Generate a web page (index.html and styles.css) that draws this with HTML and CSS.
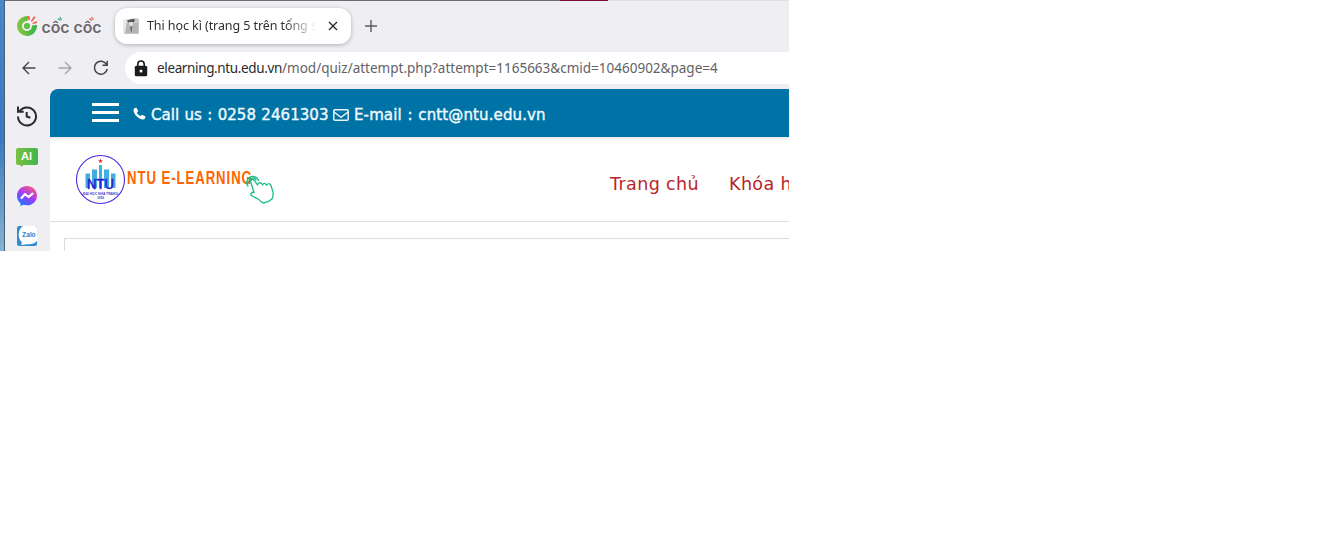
FILE: index.html
```html
<!DOCTYPE html>
<html lang="vi">
<head>
<meta charset="utf-8">
<title>Thi học kì</title>
<link rel="stylesheet" href="styles.css">
</head>
<body>
<div class="screen">
  <div class="desktop"></div>
  <div class="browser">
    <div class="top-edge"><span class="edge-dark"></span><span class="edge-red"></span></div>
    <div class="tabs">
      <svg class="brand" width="88" height="28" viewBox="0 0 88 28">
        <defs><linearGradient id="g" x1="0" y1="0" x2="1" y2="0"><stop offset="0" stop-color="#8cc63f"/><stop offset="1" stop-color="#35b44a"/></linearGradient></defs>
        <path d="M11 4A10 10 0 1 0 20 13L14.500 13.500A4.600 4.600 0 1 1 10.500 9.400Z" fill="url(#g)"/>
        <circle cx="10" cy="14" r="5" fill="#efeef3"/><circle cx="10" cy="14" r="3.100" fill="#64bd45"/>
        <path d="M11.300 8 10.500 4.300 12.500 4.200 12.800 8ZM13.800 9 17 4.300 18.500 5.300 15 9.800ZM15.500 11 19.500 9 20 10.900 15.800 12.100Z" fill="#ef5a3c"/>
        <text x="24.500" y="21" class="brand-text" textLength="28" lengthAdjust="spacingAndGlyphs">côc</text>
        <text x="56.500" y="21" class="brand-text" textLength="28" lengthAdjust="spacingAndGlyphs">côc</text>
        <path d="M41 6.500l2.300 2M43 5l1.500 3" stroke="#39b570" stroke-width="1.200"/>
        <path d="M72.500 6.500l2.300 2M74.500 5l2 3" stroke="#ef5a3c" stroke-width="1.200"/>
      </svg>
      <div class="tab">
        <svg width="16" height="16" viewBox="0 0 16 16"><path d="M1 2 13 0 16 1V16H1Z" fill="#c7c7c7"/><path d="M0 2H4L2 15H0Z" fill="#e8e8e8"/><path d="M2 15 4 5H15V15Z" fill="#b5b5b5"/><path d="M4 2.500 10 .8 12 2 11 4 9.500 5H6L5 4Z" fill="#555"/><path d="M6 4H10V7L8 8.500 6 7Z" fill="#ddd"/><path d="M7 8.500 8 9 9.500 8 8.500 14H8Z" fill="#666"/></svg>
        <span class="tab-title">Thi học kì (trang 5 trên tổng s</span>
        <svg class="close" width="10" height="10" viewBox="0 0 10 10"><path d="M1 1 9 9M9 1 1 9" stroke="#222" stroke-width="1.200"/></svg>
      </div>
      <svg class="plus" width="12" height="12" viewBox="0 0 12 12"><path d="M6 0V12M0 6H12" stroke="#5b5b60" stroke-width="1.400"/></svg>
    </div>
    <div class="toolbar">
      <svg width="14" height="14" viewBox="0 0 14 14" fill="none" stroke="#46464a" stroke-width="1.400"><path d="M13.500 7H1.500M7 1 1 7 7 13"/></svg>
      <svg width="14" height="14" viewBox="0 0 14 14" fill="none" stroke="#a5a4a8" stroke-width="1.400"><path d="M.5 7H12.500M7 1 13 7 7 13"/></svg>
      <svg width="16" height="16" viewBox="0 0 16 16" fill="none" stroke="#444448" stroke-width="1.500"><path d="M13.600 4.500A6.500 6.500 0 1 0 14.300 9M14.200 .8V5.200H9.500"/></svg>
      <div class="address">
        <svg width="14" height="17" viewBox="0 0 14 17"><path d="M3.800 7V4.200a3.200 3.200 0 0 1 6.400 0V7" fill="none" stroke="#1c1c1f" stroke-width="1.600"/><rect x=".8" y="5.700" width="12.400" height="10.600" rx="1.500" fill="#1c1c1f"/><circle cx="7" cy="11" r="1.500" fill="#fff"/></svg>
        <span class="url"><b>elearning.ntu.edu.vn</b>/mod/quiz/attempt.php?attempt=1165663&amp;cmid=10460902&amp;page=4</span>
      </div>
    </div>
    <div class="content">
      <div class="sidebar">
        <svg width="22" height="22" viewBox="0 0 22 22" fill="none" stroke="#2a2a2c" stroke-width="2"><path d="M3.500 6.500A9 9 0 1 1 2 11.500M2 1.500V6.700H7.700M10.700 7V11.500L14.300 12.700"/></svg>
        <svg width="22" height="20" viewBox="0 0 22 20"><defs><linearGradient id="a" x2="1"><stop stop-color="#79c143"/><stop offset="1" stop-color="#42b549"/></linearGradient></defs><path d="M2 1H20Q22 1 22 3V16Q22 18 20 18H7.500L5 20 4.500 18H2Q0 18 0 16V3Q0 1 2 1Z" fill="url(#a)"/><text x="5" y="12.500" class="ai" textLength="11">AI</text></svg>
        <svg width="20" height="20" viewBox="0 0 20 20"><defs><linearGradient id="m" x1=".2" y1="1" x2=".8" y2="0"><stop stop-color="#087cff"/><stop offset=".5" stop-color="#a13bfb"/><stop offset="1" stop-color="#ff6072"/></linearGradient></defs><path d="M10 0C4.500 0 0 4 0 9.700 0 13 1.300 15.500 3.500 17.200V20L6.500 18.800C13.500 20.800 20 16.500 20 9.700 20 4 15.500 0 10 0Z" fill="url(#m)"/><path d="M4.500 12 8 8 11.500 11 15.500 7.700" fill="none" stroke="#fff" stroke-width="2.200" stroke-linejoin="round" stroke-linecap="round"/></svg>
        <svg width="20" height="20" viewBox="0 0 20 20"><rect width="20" height="20" rx="2" fill="#328bd0"/><path d="M6 0H18Q20 0 20 2V15Q16 19 10 18.200L4 19 5 16.500C0 12 1 3 6 0Z" fill="#fff"/><text x="5" y="11" class="zalo" textLength="13.500" lengthAdjust="spacingAndGlyphs">Zalo</text></svg>
      </div>
      <main class="page">
        <div class="contact">
          <div class="burger"><i></i><i></i><i></i></div>
          <svg class="phone" width="13" height="13" viewBox="0 0 13 13"><path d="M1 1.600 3.300.5 5.300 4 3.900 5.400C4.500 7 6 8.500 7.700 9.100L9 7.700 12.500 9.600C12.500 11.500 11.500 12.600 10 12.600 5.500 12.300.7 7.500.5 3Z" fill="#fff"/></svg>
          <span class="call">Call us : 0258 2461303</span>
          <svg class="mail" width="16" height="12" viewBox="0 0 16 12" fill="none" stroke="#e9f3f8" stroke-width="1.500"><rect x=".8" y=".8" width="14.400" height="10.400" rx="1"/><path d="M1 3 8 8.300 15 3"/></svg>
          <span class="email">E-mail : cntt@ntu.edu.vn</span>
        </div>
        <div class="masthead">
          <svg class="logo" width="200" height="52" viewBox="0 0 200 52">
            <circle cx="25.500" cy="26.500" r="24" fill="#fff" stroke="#4a28e0" stroke-width="1.100"/>
            <path d="M25.500 5.500 26.100 7.200H28L26.500 8.300 27 10 25.500 9 24 10 24.500 8.300 23 7.200H24.900Z" fill="#e8232a"/>
            <path d="M10.500 35V20.500H15V35ZM17 35V16.500H22V35ZM24 35V12H27V35ZM29 35V16.500H34V35ZM36 35V20.500H40.500V35Z" fill="#42aee0"/>
            <text x="12" y="35.700" class="ntu" textLength="27" lengthAdjust="spacingAndGlyphs">NTU</text>
            <text x="8" y="41.500" class="tiny" textLength="35" lengthAdjust="spacingAndGlyphs">ĐẠI HỌC NHA TRANG</text>
            <text x="22" y="46" class="tiny" textLength="7" lengthAdjust="spacingAndGlyphs">1959</text>
            <g transform="translate(52 31) scale(.73 1)"><text class="title" textLength="171">NTU E-LEARNING</text></g>
            <g fill="none" stroke="#17bb85" stroke-width="1.300" stroke-linejoin="round" stroke-linecap="round">
              <path d="M173 33A6 6 0 1 1 183.500 27.500M174.500 30.500A3.600 3.600 0 1 1 181 27"/>
              <path d="M179 39.500 175.500 28.500Q177 25 179.500 27.500L182.500 32Q183.500 28.500 186.500 30.500L187.500 32Q189 28.800 191.500 32Q194.500 29 196 32.500L198 39Q198.500 43 197 46Q193 49.500 188.500 50Q186 49.500 184 46.500L178 43.500Q174 41.500 177 39.500Z"/>
            </g>
          </svg>
          <nav class="menu"><a>Trang chủ</a><a>Khóa h</a></nav>
        </div>
        <div class="panel"></div>
      </main>
    </div>
  </div>
</div>
</body>
</html>
```

FILE: styles.css
```css
* { box-sizing: border-box; }
body { margin: 0; background: #fff; overflow: hidden; }
svg { display: block; flex: none; }
.screen { display: flex; width: 789px; height: 251px; overflow: hidden; }
.desktop { width: 5px; flex: none; border-right: 1px solid #465d75; background: linear-gradient(#4a86c8, #3979c2 55%, #86b4cf); }
.browser { width: 784px; flex: none; background: #efeef3; }
.top-edge { display: flex; height: 1px; background: #e1e1e3; }
.edge-dark { width: 555px; background: #706d72; }
.edge-red { width: 48px; background: #7b0b34; }
.tabs { display: flex; height: 51px; padding: 7px 0 0 12px; }
.brand { margin-top: 4px; }
.brand-text { font: 600 15.5px Inter, sans-serif; fill: #6a686d; }
.tab { display: flex; align-items: center; width: 236px; height: 36px; margin-left: 10px; padding: 0 13px 0 8px; border-radius: 12px; background: #fff; box-shadow: 0 1px 4px #0004; }
.tab-title { width: 169px; margin-left: 8px; overflow: hidden; white-space: nowrap; font: 12.5px/20px "Noto Sans", sans-serif; letter-spacing: -.08px; color: #303034; -webkit-mask-image: linear-gradient(90deg, #000 137px, transparent 169px); mask-image: linear-gradient(90deg, #000 137px, transparent 169px); }
.close { margin-left: 12px; }
.plus { margin: 12px 0 0 14px; }
.toolbar { display: flex; align-items: center; gap: 22px; height: 32px; padding-left: 17px; }
.toolbar > svg:nth-child(3) { margin-left: -1px; }
.address { display: flex; flex: 1; align-items: center; height: 32px; margin-left: -6px; padding-left: 9px; border-radius: 16px 0 0 16px; background: #fff; }
.url { margin-left: 9px; font: 13.5px/20px "Noto Sans", sans-serif; color: #626266; white-space: nowrap; }
.url b { font-weight: 400; letter-spacing: -.36px; color: #2a2a2e; }
.content { display: flex; height: 167px; padding-top: 5px; }
.sidebar { display: flex; flex-direction: column; align-items: center; width: 45px; padding: 16px 2px 0 0; }
.sidebar svg:nth-child(2) { margin-top: 20px; }
.sidebar svg:nth-child(3) { margin-top: 19px; }
.sidebar svg:nth-child(4) { margin-top: 20px; }
.ai { font: 600 11px Inter, sans-serif; fill: #fff; }
.zalo { font: 700 6px Inter, sans-serif; fill: #168bd8; }
.page { width: 739px; height: 162px; overflow: hidden; border-radius: 8px 0 0; background: #fff; }
.contact { display: flex; align-items: center; height: 48px; padding: 0 0 1px 42px; background: #0073a6; color: #eff9fd; }
.burger { display: grid; gap: 5px; width: 27px; }
.burger i { height: 3px; background: #fff; }
.phone { margin: 1px 0 0 14px; }
.call, .email { font: 15px/22px "DejaVu Sans", sans-serif; white-space: nowrap; margin-top: 4px; -webkit-text-stroke: .4px; }
.call { width: 183px; margin-left: 5px; letter-spacing: .05px; word-spacing: .5px; }
.email { margin-left: 5px; letter-spacing: .12px; word-spacing: .8px; }
.mail { margin: 4px 0 0 -1px; }
.masthead { display: flex; height: 85px; border-bottom: 1px solid #dedee0; padding-left: 25px; box-shadow: inset 0 5px 5px -4px #0002; }
.logo { margin-top: 16px; }
.ntu { font: 400 14px "Liberation Sans", sans-serif; fill: #271ed1; stroke: #271ed1; stroke-width: .5px; }
.tiny { font: 700 4px "Liberation Sans", sans-serif; fill: #4938cf; }
.title { font: 700 18px "Liberation Sans", sans-serif; fill: #ff6500; }
.menu { display: flex; gap: 30px; margin: 35px 0 0 335px; font: 17.5px/24px "DejaVu Sans", sans-serif; letter-spacing: .38px; color: #b92327; white-space: nowrap; }
.panel { height: 40px; margin: 16px 0 0 14px; border: 1px solid #dcdcde; border-right: 0; }
```
